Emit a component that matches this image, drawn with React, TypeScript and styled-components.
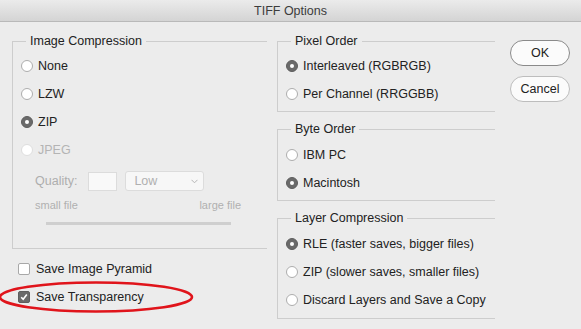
import React from 'react';
import styled, { createGlobalStyle } from 'styled-components';

const GlobalStyle = createGlobalStyle`
  html, body {
    margin: 0;
    padding: 0;
    background: #ececec;
  }
  body {
    font-family: "Liberation Sans", Arial, sans-serif;
    font-size: 12.5px;
    color: #222;
  }
`;

const Dialog = styled.div`
  position: relative;
  width: 581px;
  height: 329px;
  overflow: hidden;
  background: #ececec;
`;

const TitleBar = styled.div`
  height: 21px;
  display: flex;
  align-items: center;
  justify-content: center;
  background: linear-gradient(#ebebeb, #d4d4d4);
  border-bottom: 1px solid #b9b9b9;
  color: #3c3c3c;
  font-size: 12.5px;
`;

const Body = styled.div`
  display: flex;
  align-items: flex-start;
  padding: 11px 0 0 12px;
`;

const LeftColumn = styled.div`
  width: 255px;
  display: flex;
  flex-direction: column;
`;

const RightColumn = styled.div`
  width: 218px;
  margin-left: 10px;
  display: flex;
  flex-direction: column;
  gap: 9px;
`;

const ButtonColumn = styled.div`
  width: 60px;
  margin-left: 15px;
  margin-top: 7px;
  display: flex;
  flex-direction: column;
  gap: 10px;
`;

const Group = styled.fieldset<{ $top?: number; $bottom?: number }>`
  margin: 0;
  padding: ${p => p.$top ?? 3}px 0 ${p => p.$bottom ?? 3}px 8px;
  min-width: 0;
  border: 1px solid #cdcdcd;
  border-right: none;
`;

const Legend = styled.legend`
  margin-left: 5px;
  padding: 0 4px;
  line-height: 16px;
  color: #222;
`;

const OptionRow = styled.label<{ $disabled?: boolean }>`
  height: 28px;
  display: flex;
  align-items: center;
  gap: 5px;
  color: ${p => (p.$disabled ? '#b4b4b4' : '#222')};
`;

const RadioDot = styled.span<{ $on?: boolean; $disabled?: boolean }>`
  width: 12px;
  height: 12px;
  box-sizing: border-box;
  border-radius: 50%;
  flex: none;
  display: flex;
  align-items: center;
  justify-content: center;
  background: ${p => (p.$on ? '#6a6a6a' : '#fff')};
  border: 1px solid ${p => (p.$on ? '#5e5e5e' : p.$disabled ? '#dedede' : '#adadad')};

  &::after {
    content: '';
    display: ${p => (p.$on ? 'block' : 'none')};
    width: 4px;
    height: 4px;
    border-radius: 50%;
    background: #fff;
  }
`;

const CheckRow = styled.label`
  height: 28px;
  display: flex;
  align-items: center;
  gap: 6px;
  padding-left: 6px;
`;

const CheckBox = styled.span<{ $on?: boolean }>`
  width: 12px;
  height: 12px;
  box-sizing: border-box;
  border-radius: 2px;
  flex: none;
  display: flex;
  align-items: center;
  justify-content: center;
  background: ${p => (p.$on ? '#6a6a6a' : '#fff')};
  border: 1px solid ${p => (p.$on ? '#5e5e5e' : '#a8a8a8')};
`;

const QualityRow = styled.div`
  display: flex;
  align-items: center;
  height: 20px;
  margin-top: 7px;
  padding-left: 14px;
  color: #aeaeae;
`;

const QualityInput = styled.span`
  width: 29px;
  height: 19px;
  box-sizing: border-box;
  margin-left: 11px;
  background: #f9f9f9;
  border: 1px solid #dcdcdc;
`;

const SelectBox = styled.span`
  width: 79px;
  height: 20px;
  box-sizing: border-box;
  margin-left: 8px;
  padding: 0 5px 0 8px;
  display: flex;
  align-items: center;
  justify-content: space-between;
  background: #f7f7f7;
  border: 1px solid #dcdcdc;
  border-radius: 3px;
  color: #b0b0b0;
`;

const RangeLabels = styled.div`
  display: flex;
  justify-content: space-between;
  width: 206px;
  margin: 8px 0 0 14px;
  font-size: 11px;
  line-height: 13px;
  color: #b0b0b0;
`;

const Track = styled.div`
  width: 185px;
  height: 3px;
  margin: 10px 0 0 25px;
  background: #cfcfcf;
`;

const Checks = styled.div`
  margin-top: 6px;
`;

const PillButton = styled.button<{ $primary?: boolean }>`
  width: 60px;
  height: 26px;
  box-sizing: border-box;
  border-radius: 13px;
  border: 1px solid ${p => (p.$primary ? '#8a8a8a' : '#bdbdbd')};
  background: #fbfbfb;
  font-family: "Liberation Sans", Arial, sans-serif;
  font-size: 12.5px;
  color: #222;
  padding: 0;
`;

const Annotation = styled.svg`
  position: absolute;
  left: -4px;
  top: 280px;
  pointer-events: none;
`;

const Radio = ({ label, on, disabled }: { label: string; on?: boolean; disabled?: boolean }) => (
  <OptionRow $disabled={disabled}>
    <RadioDot $on={on} $disabled={disabled} />
    {label}
  </OptionRow>
);

const Check = ({ label, on }: { label: string; on?: boolean }) => (
  <CheckRow>
    <CheckBox $on={on}>
      {on && (
        <svg width="8" height="8" viewBox="0 0 8 8">
          <path d="M1.2 4.2 L3.2 6.2 L6.8 1.6" fill="none" stroke="#fff" strokeWidth="1.6" />
        </svg>
      )}
    </CheckBox>
    {label}
  </CheckRow>
);

const App = () => {
  return (
    <Dialog>
      <GlobalStyle />
      <TitleBar>TIFF Options</TitleBar>
      <Body>
        <LeftColumn>
          <Group $top={3} $bottom={23}>
            <Legend>Image Compression</Legend>
            <Radio label="None" />
            <Radio label="LZW" />
            <Radio label="ZIP" on />
            <Radio label="JPEG" disabled />
            <QualityRow>
              Quality:
              <QualityInput />
              <SelectBox>
                Low
                <svg width="7" height="5" viewBox="0 0 7 5">
                  <path d="M0.5 0.8 L3.5 3.8 L6.5 0.8" fill="none" stroke="#b5b5b5" strokeWidth="1" />
                </svg>
              </SelectBox>
            </QualityRow>
            <RangeLabels>
              <span>small file</span>
              <span>large file</span>
            </RangeLabels>
            <Track />
          </Group>
          <Checks>
            <Check label="Save Image Pyramid" />
            <Check label="Save Transparency" on />
          </Checks>
        </LeftColumn>
        <RightColumn>
          <Group>
            <Legend>Pixel Order</Legend>
            <Radio label="Interleaved (RGBRGB)" on />
            <Radio label="Per Channel (RRGGBB)" />
          </Group>
          <Group $top={4}>
            <Legend>Byte Order</Legend>
            <Radio label="IBM PC" />
            <Radio label="Macintosh" on />
          </Group>
          <Group $top={4} $bottom={4}>
            <Legend>Layer Compression</Legend>
            <Radio label="RLE (faster saves, bigger files)" on />
            <Radio label="ZIP (slower saves, smaller files)" />
            <Radio label="Discard Layers and Save a Copy" />
          </Group>
        </RightColumn>
        <ButtonColumn>
          <PillButton $primary>OK</PillButton>
          <PillButton>Cancel</PillButton>
        </ButtonColumn>
      </Body>
      <Annotation width="200" height="34" viewBox="0 0 200 34">
        <ellipse cx="100" cy="17" rx="96" ry="14.5" fill="none" stroke="#e0141b" strokeWidth="2.6" />
      </Annotation>
    </Dialog>
  );
};

export default App;
